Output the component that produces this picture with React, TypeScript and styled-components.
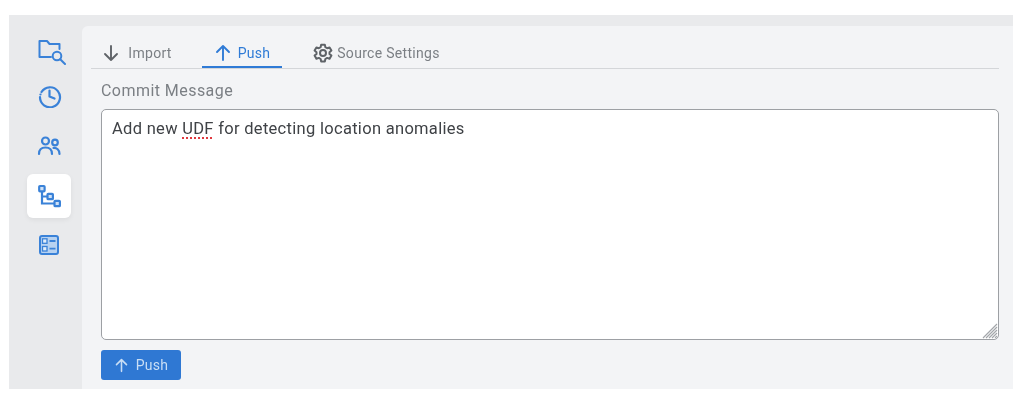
import React, { FC } from 'react'
import styled, { createGlobalStyle } from 'styled-components'

const GlobalStyle = createGlobalStyle`
	html, body {
		margin: 0;
		padding: 0;
		background: #ffffff;
	}
	body {
		font-family: Roboto, 'Liberation Sans', sans-serif;
	}
`

const Page = styled.div`
	width: 1024px;
	height: 406px;
	box-sizing: border-box;
	padding: 15px 11px 17px 9px;
	filter: blur(0.45px);
`

const Frame = styled.div`
	display: flex;
	height: 100%;
	background: #e9eaec;
`

const Sidebar = styled.nav`
	width: 73px;
	flex: none;
	display: flex;
	flex-direction: column;
	align-items: center;
	padding: 12px 0 0 7px;
	box-sizing: border-box;
`

const SideItem = styled.div<{ $active?: boolean }>`
	width: 44px;
	height: 44px;
	margin-bottom: 5px;
	display: flex;
	align-items: center;
	justify-content: center;
	border-radius: 6px;
	color: #3a82d8;
	background: ${(p) => (p.$active ? '#ffffff' : 'transparent')};
	box-shadow: ${(p) => (p.$active ? '0 2px 5px rgba(0, 0, 0, 0.06)' : 'none')};
`

const Panel = styled.main`
	flex: 1;
	margin-top: 11px;
	background: #f3f4f6;
	border-top-left-radius: 6px;
	padding: 0 14px 9px 9px;
	display: flex;
	flex-direction: column;
	min-width: 0;
`

const Tabs = styled.div`
	display: flex;
	height: 43px;
	box-sizing: border-box;
	border-bottom: 1px solid #d4d6d9;
	padding: 0 0 0 1px;
`

const Tab = styled.div<{ $active?: boolean; $width: number; $gap: number }>`
	width: ${(p) => p.$width}px;
	box-sizing: border-box;
	display: flex;
	align-items: center;
	justify-content: center;
	gap: ${(p) => p.$gap}px;
	padding-top: 13px;
	height: 42px;
	font-size: 14px;
	letter-spacing: 0.3px;
	color: ${(p) => (p.$active ? '#2f7bd6' : '#7b7f84')};
	border-bottom: 2px solid ${(p) => (p.$active ? '#2f7bd6' : 'transparent')};
	svg {
		color: ${(p) => (p.$active ? '#2f7bd6' : '#5f6368')};
	}
`

const Spacer = styled.div<{ $width: number }>`
	width: ${(p) => p.$width}px;
	flex: none;
`

const Body = styled.div`
	flex: 1;
	display: flex;
	flex-direction: column;
	padding: 0 0 0 10px;
`

const Label = styled.div`
	font-size: 16px;
	line-height: 19px;
	letter-spacing: 0.45px;
	color: #7b7f84;
	margin-top: 12px;
	margin-bottom: 9px;
`

const MessageBox = styled.div`
	position: relative;
	height: 231px;
	box-sizing: border-box;
	background: #ffffff;
	border: 1.5px solid #9da0a4;
	border-radius: 5px;
	padding: 9px 10px;
	font-size: 16.5px;
	line-height: 20px;
	letter-spacing: 0.3px;
	color: #3f4246;
`

const Misspelled = styled.span`
	text-decoration: underline dotted #e0383e 1.5px;
	text-underline-offset: 3px;
`

const Grip = styled.svg`
	position: absolute;
	right: 0;
	bottom: 0;
`

const PushButton = styled.button`
	width: 80px;
	height: 30px;
	margin-top: 10px;
	display: flex;
	align-items: center;
	justify-content: center;
	gap: 7px;
	padding: 0;
	border: none;
	border-radius: 3px;
	background: #2f78d3;
	color: #c9def5;
	font-family: inherit;
	font-size: 14px;
	letter-spacing: 0.3px;
`

const FolderSvg = styled.svg`
	margin: 6px 0 0 6px;
`

const HistorySvg = styled.svg`
	margin: 0 0 4px 1px;
`

const FolderSearchIcon: FC = () => (
	<FolderSvg width="28" height="26" viewBox="0 0 28 26" fill="none" stroke="currentColor" strokeWidth="2" strokeLinejoin="round" strokeLinecap="round">
		<path d="M13 18H1.500V2h7.500l2.500 3h10v5" />
		<circle cx="19" cy="17" r="4.300" />
		<path d="M22.200 20.200L27 25" />
	</FolderSvg>
)

const HistoryIcon: FC = () => (
	<HistorySvg width="24" height="24" viewBox="0 0 24 24" fill="none" stroke="currentColor" strokeWidth="2.200" strokeLinecap="round" strokeLinejoin="round">
		<path d="M3.500 8A10 10 0 1 1 2 13" />
		<path d="M2.400 10.500h.1" />
		<path d="M11.500 6.500V12.500l5 2" />
	</HistorySvg>
)

const PeopleIcon: FC = () => (
	<svg width="24" height="24" viewBox="0 1 24 24" fill="none" stroke="currentColor" strokeWidth="2.200" strokeLinecap="round" strokeLinejoin="round">
		<circle cx="8.500" cy="7" r="3.500" />
		<circle cx="18" cy="8.500" r="2.800" />
		<path d="M2 20c0-4.500 2.800-6.500 6.500-6.500S15 15.500 15 20" />
		<path d="M16.500 14c3.200-.3 6 1.600 6 6" />
	</svg>
)

const TreeIcon: FC = () => (
	<svg width="24" height="24" viewBox="0 0 24 24" fill="#cfe1f6" stroke="currentColor" strokeWidth="2.200">
		<path d="M5 7v12.500h12.500M5 12.500h5.500" fill="none" />
		<rect x="2.200" y="2" width="5.400" height="5.400" rx="0.800" />
		<rect x="10.500" y="9.800" width="5.400" height="5.400" rx="0.800" />
		<rect x="17.500" y="16.800" width="5.400" height="5.400" rx="0.800" />
	</svg>
)

const ChecklistIcon: FC = () => (
	<svg width="22" height="22" viewBox="0 0 22 22" fill="none" stroke="currentColor">
		<rect x="2" y="2" width="18" height="18" rx="2" fill="#b7d2f1" strokeWidth="2" />
		<rect x="4.500" y="4.800" width="4.500" height="4.500" fill="#e3eefa" strokeWidth="1.300" />
		<rect x="4.500" y="12.500" width="4.500" height="4.500" fill="#e3eefa" strokeWidth="1.300" />
		<path d="M11.500 7h6M11.500 14.700h6" strokeWidth="1.800" />
	</svg>
)

const ArrowIcon: FC<{ down?: boolean; size?: number }> = ({ down, size = 18 }) => (
	<svg width={size} height={size} viewBox="0 0 18 18" fill="none" stroke="currentColor" strokeWidth="1.900" strokeLinecap="round" strokeLinejoin="round">
		{down ? <path d="M9 2v14M3 10l6 6 6-6" /> : <path d="M9 16V2M3 8l6-6 6 6" />}
	</svg>
)

const GearIcon: FC = () => (
	<svg width="20" height="20" viewBox="0 0 24 24" fill="none" stroke="currentColor" strokeWidth="2.400" strokeLinejoin="round">
		<path d="M9.800 2h4.400l.6 3 2.200 1.300 2.900-1 2.200 3.800-2.300 2v2l2.300 2-2.200 3.800-2.900-1-2.200 1.300-.6 3H9.800l-.6-3-2.200-1.300-2.900 1-2.200-3.800 2.300-2v-2l-2.300-2 2.200-3.800 2.900 1L9.200 5z" />
		<circle cx="12" cy="12" r="3.600" />
	</svg>
)

const App: FC = () => {
	return (
		<Page>
			<GlobalStyle />
			<Frame>
				<Sidebar>
					<SideItem><FolderSearchIcon /></SideItem>
					<SideItem><HistoryIcon /></SideItem>
					<SideItem><PeopleIcon /></SideItem>
					<SideItem $active><TreeIcon /></SideItem>
					<SideItem><ChecklistIcon /></SideItem>
				</Sidebar>
				<Panel>
					<Tabs>
						<Tab $width={90} $gap={8}><ArrowIcon down />Import</Tab>
						<Spacer $width={20} />
						<Tab $active $width={80} $gap={6}><ArrowIcon />Push</Tab>
						<Spacer $width={30} />
						<Tab $width={129} $gap={4}><GearIcon />Source Settings</Tab>
					</Tabs>
					<Body>
						<Label>Commit Message</Label>
						<MessageBox>
							Add new <Misspelled>UDF</Misspelled> for detecting location anomalies
							<Grip width="17" height="17" viewBox="0 0 17 17" stroke="#a3a6aa" strokeWidth="1.200">
								<path d="M2 16L16 2M5 16L16 5M8 16l8-8M11 16l5-5M14 16l2-2" />
							</Grip>
						</MessageBox>
						<PushButton><ArrowIcon size={15} />Push</PushButton>
					</Body>
				</Panel>
			</Frame>
		</Page>
	)
}

export default App
